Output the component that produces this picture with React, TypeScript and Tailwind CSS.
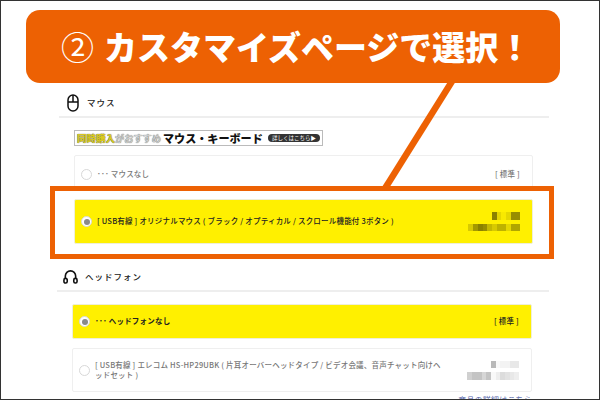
function Pixels({ cells, tone }: { cells: number[][]; tone: string }) {
  return (
    <div className="flex flex-col items-end gap-[4px] blur-[0.4px]">
      {cells.map((row, i) => (
        <div key={i} className="flex">
          {row.map((o, j) => (
            <div
              key={j}
              className="w-[4.7px] h-[7.5px]"
              style={{ backgroundColor: tone, opacity: o }}
            />
          ))}
        </div>
      ))}
    </div>
  );
}

function Radio({ on }: { on?: boolean }) {
  return (
    <div className="w-[11px] h-[11px] rounded-full border border-[#d8d8d8] bg-white flex items-center justify-center shrink-0">
      {on && <div className="w-[6px] h-[6px] rounded-full bg-[#8a8a8a]" />}
    </div>
  );
}

function Row({
  on,
  h,
  label,
  right,
  raised,
}: {
  on?: boolean;
  h: string;
  label: React.ReactNode;
  right: React.ReactNode;
  raised?: boolean;
}) {
  return (
    <div
      className={`${h} ${raised ? "relative z-10" : ""} ${on ? "bg-[#fff000] border-[#efefd8] text-[#222]" : "bg-white border-[#efefef] text-[#777]"} border rounded-[2px] flex items-center pl-[6px] pr-[12px] gap-[5px] text-[7.5px] font-medium leading-[10.5px] tracking-[0.2px]`}
    >
      <Radio on={on} />
      <div className="flex-1 min-w-0">{label}</div>
      {right}
    </div>
  );
}

export default function App() {
  return (
    <div
      className="relative w-[600px] h-[400px] overflow-hidden bg-white border border-[#333]"
      style={{ fontFamily: '"Noto Sans CJK JP", "Noto Sans", sans-serif' }}
    >
      <div className="flex flex-col pt-[88px] pl-[58px] w-[548px]">
        <div className="flex items-center gap-[8px] h-[29px] border-b-2 border-[#eeeeee] pl-[8px]">
          <svg width="12" height="18" viewBox="0 0 12 18" fill="none" stroke="#111" strokeWidth="1.5">
            <rect x="1" y="1" width="10" height="16" rx="5" />
            <path d="M1 8h10M6 1v7" />
          </svg>
          <span className="text-[8.5px] font-medium tracking-[1px] text-[#222]">マウス</span>
        </div>
        <div className="flex flex-col pl-[15px] pr-[16px]">
          <div className="mt-[12px] w-[249px] h-[16px] border border-[#bbb] bg-white flex items-center pl-[2px] pr-[2px] overflow-hidden">
            <span className="text-[9.5px] font-black text-[#d8c820] [text-shadow:0_0_1px_#333] leading-[12px] whitespace-nowrap">同時購入</span>
            <span className="text-[9.2px] font-bold text-[#ccc] [text-shadow:0_0_1px_#444] leading-[12px] whitespace-nowrap">がおすすめ</span>
            <span className="ml-[2px] text-[11.1px] font-black text-[#111] leading-[14px] whitespace-nowrap">マウス・キーボード</span>
            <span className="ml-auto h-[8px] w-[52px] rounded-full bg-[#333] text-white text-[5.5px] leading-[8px] text-center whitespace-nowrap">詳しくはこちら▶</span>
          </div>
          <div className="mt-[9px]">
            <Row h="h-[38px]" label="･･･ マウスなし" right={<span>[ 標準 ]</span>} />
          </div>
          <div className="mt-[6px]">
            <Row
              on
              raised
              h="h-[45px]"
              label="[ USB有線 ] オリジナルマウス ( ブラック / オプティカル / スクロール機能付 3ボタン )"
              right={
                <Pixels
                  tone="#7d7400"
                  cells={[
                    [0.9, 0.2, 0.05, 0.2, 0.8, 0.8],
                    [0.3, 0.7, 0.9, 0.8, 0.45, 0.3, 0.5, 0.5, 0.2, 0.6, 0.6],
                  ]}
                />
              }
            />
          </div>
        </div>

        <div className="ml-[-2px] mt-[18px] flex items-center gap-[7px] h-[30px] border-b-2 border-[#eeeeee] pl-[6px]">
          <svg width="15" height="15" viewBox="0 0 16 16" fill="none" stroke="#111" strokeWidth="1.7">
            <path d="M2.5 10V7.5a5.5 5.5 0 0 1 11 0V10" />
            <rect x="1" y="10" width="3.5" height="5" rx="1.6" />
            <rect x="11.5" y="10" width="3.5" height="5" rx="1.6" />
          </svg>
          <span className="text-[8.5px] font-medium tracking-[1px] text-[#222]">ヘッドフォン</span>
        </div>
        <div className="flex flex-col pl-[13px] pr-[17px]">
          <div className="mt-[12px]">
            <Row on h="h-[35px]" label={<span className="font-bold">･･･ ヘッドフォンなし</span>} right={<span>[ 標準 ]</span>} />
          </div>
          <div className="mt-[9px]">
            <Row
              h="h-[44px]"
              label={
                <div className="w-[350px]">
                  [ USB有線 ] エレコム HS-HP29UBK ( 片耳オーバーヘッドタイプ / ビデオ会議、音声チャット向けヘッドセット )
                </div>
              }
              right={
                <Pixels
                  tone="#8a8a8a"
                  cells={[
                    [0.6, 0.05, 0.1, 0.1, 0.2, 0.2],
                    [0.4, 0.5, 0.5, 0.35, 0.5, 0.05, 0.15, 0.3, 0.25, 0.2, 0.15],
                  ]}
                />
              }
            />
          </div>
          <div className="mt-[3px] text-right text-[8px] leading-[10px] tracking-[0.2px] text-[#5566aa]">商品の詳細はこちら</div>
        </div>
      </div>

      <svg className="absolute left-0 top-0" width="598" height="398" fill="none">
        <path d="M455 74 L383 189" stroke="#ed6103" strokeWidth="6.5" />
      </svg>
      <div className="absolute left-[49px] top-[185px] w-[504px] h-[73px] border-[5px] border-[#ed6103] bg-white" />
      <div className="absolute left-[25px] top-[9px] w-[534px] h-[73px] rounded-[14px] bg-[#ed6103] flex items-center pl-[35px] text-white text-[33px] font-bold leading-none whitespace-nowrap">
        <span className="font-normal mr-[10px]">②</span>
        <span className="font-black">カスタマイズページで選択！</span>
      </div>
    </div>
  );
}
